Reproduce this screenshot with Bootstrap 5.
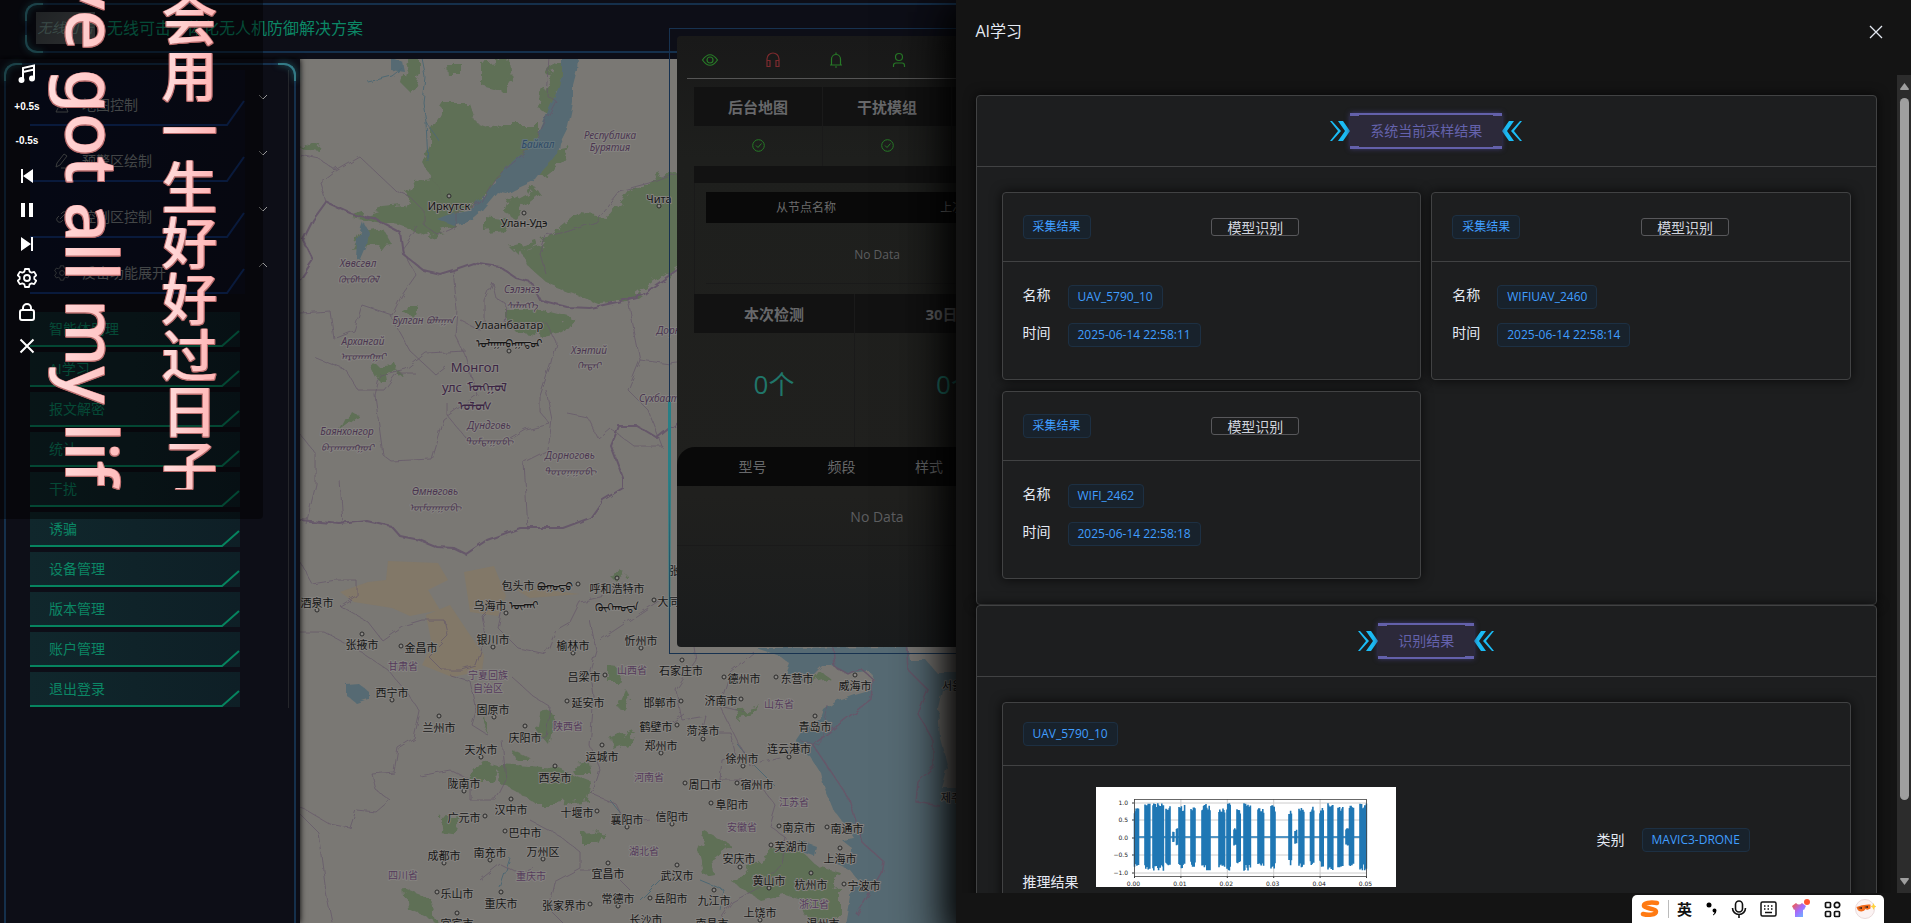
<!DOCTYPE html>
<html lang="zh-CN" data-bs-theme="dark">
<head>
<meta charset="utf-8">
<meta name="viewport" content="width=device-width, initial-scale=1">
<title>无线可击一体化无人机防御解决方案</title>
<link href="https://cdn.jsdelivr.net/npm/bootstrap@5.3.0/dist/css/bootstrap.min.css" rel="stylesheet">
<style>
  :root { --edge: #15304c; --line: #414243; --panel: #1d1e1f; --tag: #409eff; }
  body { font-family: "Open Sans", "Noto Sans CJK SC", sans-serif; font-size: 14px; line-height: 20px; background: #0d0e17; color: #e5eaf3; }
  button { font: inherit; }
  .shrinkable { min-width: 0; min-height: 0; }

  /* top bar */
  .top-frame { height: 50px; margin: 3px 0 6px 25px; border: solid var(--edge); border-width: 2px 0 2px 2px; border-radius: 12px 0 0 12px; color: #0b8765; font-size: 16px; padding-left: 9px; gap: 12px; }
  .corner { position: absolute; width: 18px; height: 18px; border: 2px solid #347b86; filter: drop-shadow(0 0 3px #2a7d86); }
  .corner.tl { left: -2px; top: -2px; border-width: 2px 0 0 2px; border-radius: 12px 0 0 0; }
  .corner.bl { left: -2px; bottom: -2px; border-width: 0 0 2px 2px; border-radius: 0 0 0 12px; }
  .corner.tr { right: -2px; top: -2px; border-width: 2px 2px 0 0; border-radius: 0 12px 0 0; }
  .brand-box { width: 59px; height: 32px; background: linear-gradient(120deg, #3b4043, #565a5e); color: #6c8a84; font-style: italic; font-size: 14px; }

  /* side menu */
  .side { width: 300px; padding-left: 4px; padding-right: 4px; box-shadow: 0 0 6px #000; z-index: 1; }
  .side-frame { border: 2px solid var(--edge); border-bottom: 0; border-radius: 12px 12px 0 0; padding: 5px 5px 0 24px; margin-top: 4px; }
  .side-scroll { border-right: 1px solid #25262b; height: 638px; }
  .side-blue { height: 56px; width: 215px; color: #7c8183; background: linear-gradient(90deg, #0b1026, #0d1020); border: 0; text-align: left; padding: 14px 0 0 24px; gap: 12px; }
  .side-green { height: 35px; width: 210px; margin-bottom: 5px; color: #0b8765; background: linear-gradient(90deg, #10272c, #0e1f26); border: 0; text-align: left; padding: 0 0 1px 19px; }
  .side-items { padding-top: 18px; }
  .under { position: absolute; left: 0; bottom: -2px; width: 100%; overflow: visible; }
  .chev { position: absolute; left: 228px; top: 24px; }

  /* lyric window lying over the page */
  .lyrics { position: absolute; left: 0; top: 0; width: 263px; height: 519px; background: rgba(0,0,0,.46); border-radius: 0 0 4px 0; z-index: 5; }
  .lyric-clip { position: absolute; inset: 0 0 30px 0; overflow: hidden; filter: drop-shadow(1px 0 0 #b96c6c) drop-shadow(-1px 0 0 #b96c6c) drop-shadow(0 1px 0 #b96c6c); }
  .lyric-line { position: absolute; writing-mode: vertical-rl; white-space: nowrap; color: transparent; background: linear-gradient(90deg, #ffdfdf, #ffb3b3); -webkit-background-clip: text; background-clip: text; }
  .lyric-cn { left: 161px; top: -9px; font: 500 56px/57px "Noto Sans CJK SC", sans-serif; }
  .lyric-en { left: 43px; top: -28px; font: 500 71px/100px "Noto Sans", sans-serif; }
  .tools { position: absolute; left: 14px; top: 56px; width: 26px; }
  .tools button { height: 34px; background: none; border: 0; padding: 0; color: #fff; }
  .tools .speed { font: bold 10px/20px "Liberation Sans Narrow", "Liberation Sans", sans-serif; }

  /* map */
  .map svg { display: block; width: 100%; height: 100%; }
  .map text { font-family: "Noto Sans", "Noto Sans CJK SC", "Noto Sans CJK KR", sans-serif; font-size: 11px; fill: #161616; text-anchor: middle; dominant-baseline: central; paint-order: stroke; stroke: #858380; stroke-width: 2px; stroke-linejoin: round; }
  .map text.prov { font-size: 10px; fill: #553b5c; }
  .map text.aimag { font-size: 10px; font-style: italic; fill: #4b3650; }
  .map text.realm { font-size: 13px; fill: #3c2644; }
  .map text.lake { font-size: 10px; font-style: italic; fill: #2f4a66; stroke: #62757c; }
  .map circle { fill: #8a8885; stroke: #2b2b2b; }

  /* monitor panel */
  .mon-frame { position: absolute; left: 669px; top: 28px; right: 0; height: 626px; border: 1px solid #173250; z-index: 2; }
  .mon-glow { position: absolute; left: -2px; top: 373px; width: 3px; height: 240px; background: linear-gradient(#277f86, #277f86 30%, transparent); }
  .mon { position: absolute; left: 677px; top: 36px; width: 400px; height: 611px; border-radius: 4px; background: linear-gradient(#191919, #1e1f1d 20%, #20201e 75%, #1a1c1d); z-index: 3; color: #5d5e60; }
  .mon-icons { height: 43px; margin: 0 10px; padding: 13px 4px 0; border-bottom: 1px solid #555; }
  .mon-icons > * { width: 63px; padding-left: 10px; }
  .mon-main { margin: 8px 18px 0 17px; }
  .mon table { width: 100%; table-layout: fixed; border-collapse: separate; border-spacing: 0; text-align: center; }
  .mon th, .mon td { border: 0 solid #1a1a1a; border-right-width: 1px; padding: 0; }
  .mon th { background: #121212; height: 39px; font-size: 15px; color: #67686a; }
  .mon td { height: 40px; }
  .mon td svg { display: block; margin: 0 auto 2px; }
  .mon th.strip { height: 17px; }
  .mon-nodes { height: 111px; padding: 9px 11px 0; border-left: 1px solid #1a1a1a; }
  .mon .sub th { background: #090909; height: 31px; font-size: 12px; font-weight: 400; border: 0; color: #6b6b6b; }
  .mon .sub .name { width: 60%; padding-right: 5px; }
  .mon .sub .seen { text-align: left; padding-left: 29px; }
  .mon .sub td { height: 61px; font-size: 12px; border-width: 0 0 1px; padding-top: 3px; }
  .mon .last th { background: #090909; height: 39px; font-size: 14px; font-weight: 400; border: 0; }
  .mon .last .round { border-radius: 18px 0 0 0; }
  .mon .last td { height: 60px; border-width: 0 0 1px; padding-top: 3px; }
  .mon .big { font-size: 26px; color: #20766a; height: 114px; padding-bottom: 12px; }
  .w31 { width: 31px; } .w86 { width: 86px; } .w89 { width: 89px; } .w129 { width: 129px; } .w161 { width: 161px; }

  /* drawer */
  .drawer { position: absolute; right: 0; top: 0; width: 50%; height: 100%; background: #141414; box-shadow: 0 16px 48px 16px rgba(0,0,0,.72), 0 12px 32px #000; z-index: 10; }
  .drawer-head { height: 75px; padding: 21px 26px 0 20px; font-size: 16px; }
  .drawer-head svg { display: block; }
  .drawer-body { margin-bottom: 30px; }
  .drawer-scroll { overflow: hidden; padding: 20px 20px 0 20px; }
  .bar { width: 14px; background: #2c2c2c; }
  .thumb { position: absolute; left: 3px; top: 23px; bottom: 93px; width: 9px; border-radius: 5px; background: #9f9f9f; }
  .box { background: var(--panel); border: 1px solid var(--line); border-radius: 4px; box-shadow: 0 0 12px rgba(0,0,0,.72); }
  .box-head { border-bottom: 1px solid var(--line); }
  .outer-head { height: 71px; }
  .pad { padding: 25px; }
  .pair { display: grid; grid-template-columns: 1fr 1fr; gap: 11px 10px; }
  .inner-head { height: 69px; padding: 0 20px; }
  .inner-body { height: 117px; padding: 23px 20px 0; gap: 14px; }
  .field { gap: 17px; }
  .field > span:first-child { line-height: 20px; }
  .result-head { height: 63px; padding: 0 20px; }
  .result-body { padding: 21px 20px 20px; }
  .result-wave { flex: 0 0 574px; gap: 17px; }
  .result-wave > span:first-child { line-height: 10px; }
  .result-kind { height: 106px; }
  .chip { display: inline-block; height: 24px; padding: 0 9px; font-size: 12px; color: var(--tag); background: #18222c; border: 1px solid #1d3043; border-radius: 4px; line-height: 22px; white-space: nowrap; }
  .plain-btn { height: 18px; line-height: 15px; width: 88px; padding: 0; border: 1px solid #58585b; border-radius: 3px; background: none; color: #cfd3dc; }
  .heading { height: 36px; line-height: 32px; padding: 0 20px; color: #6462ac; background: #2c293a; border: solid #6360aa; border-width: 2px 0; box-shadow: 0 0 5px #3d3a6e; font-size: 14px; font-weight: 400; margin: 0; }
  .heading::before, .heading::after { content: ""; position: absolute; inset: 0 auto 0 0; width: 9px; border: solid #6360aa; border-width: 1px 0; }
  .heading::after { inset: 0 0 0 auto; }
  .chart { width: 300px; height: 100px; background: #fff; }
  .chart text { font: 6px "DejaVu Sans", sans-serif; fill: #222; }

  /* input method bar */
  .ime { position: absolute; right: 27px; bottom: 0; width: 252px; height: 28px; padding: 0 8px; background: #fff; border-radius: 5px 5px 0 0; color: #111; z-index: 20; }
  .ime b { font-size: 15px; }
</style>
</head>
<body>
<div class="vh-100 d-flex flex-column overflow-hidden position-relative">

  <header>
    <div class="top-frame position-relative d-flex align-items-center">
      <i class="corner tl"></i><i class="corner bl"></i>
      <div class="brand-box d-flex align-items-center justify-content-center text-nowrap">无线可击</div>
      <span>无线可击一体化无人机防御解决方案</span>
    </div>
  </header>

  <div class="d-flex flex-grow-1 shrinkable">
    <nav class="side d-flex flex-column flex-shrink-0">
      <div class="side-frame flex-grow-1 position-relative">
        <i class="corner tl"></i><i class="corner tr"></i>
        <div class="side-scroll" id="menu"></div>
      </div>
    </nav>

    <main class="map flex-grow-1 shrinkable">
      <svg viewBox="300 59 1611 864" preserveAspectRatio="xMinYMin slice" id="map">
        <defs>
          <filter id="rough" x="-5%" y="-5%" width="110%" height="110%"><feTurbulence type="fractalNoise" baseFrequency=".09" numOctaves="3" seed="4"/><feDisplacementMap in="SourceGraphic" scale="14"/></filter>
          <filter id="edgy" x="-5%" y="-5%" width="110%" height="110%"><feTurbulence type="fractalNoise" baseFrequency=".1" numOctaves="2" seed="9"/><feDisplacementMap in="SourceGraphic" scale="6"/></filter>
        </defs>
        <rect x="300" y="59" width="1611" height="864" fill="#7a7874"/>
        <g fill="#827868">
          <path d="M388 561l50 2 10 17-20 10 12 20-30 6-18-8-38-6-14-10 28-10 18-2zM464 572l30-6 12 30-8 20-28-4zM426 615l24-10 20 30 14 20-2 16-30 6-30-12 10-20z" />
          <path d="M510 586l70 8-50 4z"/>
        </g>
        <g fill="#5f6f57" filter="url(#rough)">
          <path d="M408 58l12 0 0 16-8 20-10-10zM445 62l15 0 0 12-14 0zM482 64l28-4 2 20-8 12-22-6zM430 130l15-26 25 0 6 18 24 8 6-6 34 0 0 10-18 28-22 20-10 12-30 20-12 4-18-14 4-22-12-20 8-16zM555 62l10 0-6 35-10 18-10-6 2-15z"/>
          <path d="M416 182l18-2 10 22 14 26-30 8-28-10-48-8 32-10 20-2zM485 216l30 4-10 10-20 2zM508 200l26-14 6 8-28 22-8-4zM550 150l20-4-8 16-18 14-14 4z"/>
          <path d="M550 236l30-24 30 4 20-26 40-18 12 2 0 90-30 20-24 18-28 2-26-10-26-10-20-18-6-14 20-6zM510 248l26-8 2 6-22 8zM406 304l12 0-4 14-10-4zM506 310l36 0 32 8-12 14-20 4-26-4-10-12zM352 250l24-4 16-2-8-14-24 4z"/>
          <path d="M302 142l20 4-2 6-20-4zM500 764l56 4 36 14-4 18-32 4-20 0-22-14-16-8zM540 708l14 6-6 30-12-14zM608 664l14 2-4 16-10 0zM626 690l6 8-8 12-6-2zM612 738l22-8-4 14-16 6zM570 768l20-4 2 10-18 0zM482 762l20 6-12 12-22 0zM440 818l20-2-6 20-12-2zM582 834l22-2-6 12-16 0zM404 888l26 10 6 24-30-14zM512 750l20 10-16 0zM484 716l4 20-6-16zM706 832l24 12-18 14 2 16-10 2-6-26zM750 864l40-22 28 24 22 6-16 34-40-12-24 6-26-16zM800 900l40-14 0 34-30 6zM820 670l10 8-20 6zM735 712l26-6-8 8-18 4zM340 430l10-20 10 6zM370 366l26-2 4 10-24 4zM610 576l10-6 6 4-12 6z"/>
        </g>
        <g fill="#566b73">
          <g filter="url(#edgy)">
            <path d="M562 58l16 0-1 12-4 15 0 18-5 24-8 16-2 12-14 14-8 11-22 10-7 4-10-2-15 18-14 12-14 4-17-7 10-4 22-4 10-10 12-14 11-15 14-14 15-10 8-15 9-22 10-22 4-14z"/>
            <path d="M363 222l6 10-2 14-6 14-5-2 1-18zM346 684l12-1 10 8 0 8-12 4-10-8zM391 58l12 4 2 10-14-2zM800 840l16 6-2 10-12-4z"/>
            <path d="M756 648l24 8 10 8-4 10 10 8 18-8 8-8 10 0 16 8 22-2 4 8-6 10-14 4-16 6-14 10-4 10-16 8-8 12 2 10 12 6 10 16 4 16 8 20 14 18 8 12-12 2 10 8-4 12-12 4 14 6 8 10-8 16-6 34h230V646z"/>
          </g>
        </g>
        <path d="M906 640l4 20 16 0 10 12 60 0v-40zM938 708l4-18 60 0v98l-60 0 6-20-8-30z" fill="#7a7874" filter="url(#edgy)"/>
        <g fill="none" stroke="#4f6873" filter="url(#edgy)"><path d="M422 58l4 20-3 24 3 20 2 40M368 82l24-6 10-8M426 122l14 20M738 745l16 20 20 20M700 880l24 10-4 20M640 900l20-20 20-2M610 800l16 20M510 858l-10 30"/></g>
        <g fill="none" stroke="#66586a" filter="url(#edgy)">
          <g stroke-width="2">
            <path d="M300 280l13-20-10-20 10-20 13-18 24 11 27 7 23 12 3 22 20 16 17 4 13-4 20-7 27 4 16 11 15 4 9 18 27 7 23 1 27-6 26-7 10-8 24-17"/>
            <path d="M300 520l40 4 27-3 25 6 8 9 20 4 17 7 17 1 12 6 21-14 33-12 43 0 27-10 13-18 20-12 0-10-12-32 8-20 18 0 20 12 20-16"/>
          </g>
          <path stroke-opacity=".75" d="M300 155l20 4 16 12 24-14 36 34 14 6 14 14 0 14 14 10 18-8 0-14 24-10 16-26 24-20 16-18 20-38-10-6 4-50M326 202l-6-20 18-14M546 274l-6-20 6-18 20-4 30-10 24-30 30-8 30-12M300 313l30-2 4 28 20-8 8-26 30 10 10-20 14-20-14-26 16-22M390 315l20 36 26 24 10-8M453 270l4 40-2 25 10 20 12 40-34 24-12 40-40 2-8-6-8-60 5-20 26-6 20-16 40-2M484 330l0-30 8-18 4 16 10 6-2 20-20 0M460 320l20 10 40-6 26-2 10 20-6 24-10 30 0 16 10 12-24 6-20 12-26 2-14-6-20-24 0-12M546 390l6 30-4 30-24 12 4 68M628 300l12 60-12 30 20 20 14 36-28 0-24-18-12 10-10-20-20-4M640 360l30 4 30-4M300 434l16 20 0 30-10 40M340 480l3 44M316 358l30 12 12 20 26 0 12-16 20 0"/>
          <path stroke-opacity=".75" d="M300 562l12 22 24-4 20 0 0 16-16 10 28 16 14 18 20-14 20-6 22 0 4 16-20 20 14 14 20 0 14-4 10-30-4-20 10-10 10 4-4 18 20 20 28 6 10-24 14-8 10-20 24-6 18-14M300 632l24 0 34 18 30 20 20 24 12 18-6 26-16 10-4 24-22 2 4 16 14 10-14 12-20-2-6 18-20-4-24-14-26-10M420 776l30-6 20 10 0 20 26 0 10-20-4-40M450 675l20 6 6 30-4 14 16 10M510 675l24 22 16 10-4 30-24 6M590 620l6 30-6 20 4 26-4 50 10 24-8 24 24 10 10 20 24-4M600 640l60-40M650 730l20-6 14-10M530 820l30 16 20 16 0 16-26 14-6 26 20 20M580 870l30 0 20 20M480 880l20-16 20 10 14-6M300 814l18 18 8 60 6 30M690 620l6 40-20 30 6 30 24-4-4 16 28 0 6 24-14 4-2 20 36 0 20 26-6 20 16 12-4 26-20 22-30 16-24 36M754 652l-24 20-10 34 24 6M720 706l30 60 30-8M800 740l20 6 8-40"/>
          <path stroke-width="1.5" d="M833 647l2 20 14 8 12-6 12 10-2 20-58 46 36 54 14 44 20 18-2 12-24 42M906 640l2 30 20 20-10 24 16 28 0 24-16 16-2 20 24 4"/>
        </g>
      </svg>
    </main>
  </div>

  <section class="mon-frame"><div class="mon-glow"></div></section>
  <section class="mon">
    <div class="mon-icons d-flex">
      <span><svg width="18" height="18" viewBox="0 0 18 18" fill="none" stroke="#277a27" stroke-width="1.2"><path d="M1.500 9Q9-1.500 16.500 9Q9 19.500 1.500 9z"/><circle cx="9" cy="9" r="3"/></svg></span>
      <span><svg width="18" height="18" viewBox="0 0 18 18" fill="none" stroke="#7b2a2d" stroke-width="1.2"><path d="M3 10V8a6 6 0 0 1 12 0v2M3 9.500h3v6H3zM15 9.500h-3v6h3z"/></svg></span>
      <span><svg width="18" height="18" viewBox="0 0 18 18" fill="none" stroke="#277a27" stroke-width="1.2"><path d="M3 14h12M4.500 14V8a4.500 4.500 0 0 1 9 0v6M9 1.500v2M8 16h2"/></svg></span>
      <span><svg width="18" height="18" viewBox="0 0 18 18" fill="none" stroke="#277a27" stroke-width="1.2"><circle cx="9" cy="6" r="3.5"/><path d="M3.500 16v-1.500a2.500 2.500 0 0 1 2.500-2.500h6a2.500 2.500 0 0 1 2.500 2.500V16"/></svg></span>
    </div>
    <div class="mon-main">
      <table>
        <colgroup><col class="w129"><col class="w129"><col></colgroup>
        <tr><th>后台地图</th><th>干扰模组</th><th>压制</th></tr>
        <tr>
          <td><svg width="13" height="13" viewBox="0 0 13 13" fill="none" stroke="#277a27"><circle cx="6.5" cy="6.5" r="5.8"/><path d="M4 6.500l2 2 3.500-4"/></svg></td>
          <td><svg width="13" height="13" viewBox="0 0 13 13" fill="none" stroke="#277a27"><circle cx="6.5" cy="6.5" r="5.8"/><path d="M4 6.500l2 2 3.500-4"/></svg></td>
          <td></td></tr>
        <tr><th colspan="3" class="strip"></th></tr>
      </table>
      <div class="mon-nodes">
        <table class="sub"><tr><th class="name">从节点名称</th><th class="seen">上次在线</th></tr>
          <tr><td colspan="2">No Data</td></tr></table>
      </div>
      <table>
        <colgroup><col class="w161"><col></colgroup>
        <tr><th>本次检测</th><th>30日检测</th></tr>
        <tr><td class="big">0个</td><td class="big">0个</td></tr>
      </table>
    </div>
    <table class="last">
      <colgroup><col class="w31"><col class="w89"><col class="w89"><col class="w86"><col></colgroup>
      <tr><th class="round"></th><th>型号</th><th>频段</th><th>样式</th><th></th></tr>
      <tr><td colspan="5">No Data</td></tr>
    </table>
  </section>

  <aside class="drawer d-flex flex-column">
    <div class="drawer-head d-flex flex-shrink-0 justify-content-between align-items-start">
      <span>AI学习</span>
      <button type="button" class="border-0 bg-transparent p-0 mt-1" aria-label="关闭"><svg width="18" height="14" viewBox="0 0 18 14" stroke="#e5eaf3" stroke-width="1.3"><path d="M3 1l12 12M15 1L3 13"/></svg></button>
    </div>
    <div class="drawer-body shrinkable d-flex flex-grow-1">
      <div class="drawer-scroll flex-grow-1">
        <section class="box">
          <div class="box-head outer-head d-flex align-items-center justify-content-center" data-title="系统当前采样结果"></div>
          <div class="pad pair" id="samples"></div>
        </section>
        <section class="box">
          <div class="box-head outer-head d-flex align-items-center justify-content-center" data-title="识别结果"></div>
          <div class="pad">
            <article class="box">
              <div class="box-head result-head d-flex align-items-center"><span class="chip">UAV_5790_10</span></div>
              <div class="result-body d-flex align-items-start">
                <div class="result-wave d-flex align-items-end"><span>推理结果</span>
                  <svg class="chart" viewBox="0 0 300 100" id="wave"></svg></div>
                <div class="result-kind field d-flex align-items-center"><span>类别</span><span class="chip">MAVIC3-DRONE</span></div>
              </div>
            </article>
          </div>
        </section>
      </div>
      <div class="bar position-relative flex-shrink-0">
        <svg class="position-absolute start-0 top-0" width="14" height="20" fill="#9f9f9f"><path d="M7.500 8l4.500 6q0 1-1 1H4q-1 0-1-1z"/></svg>
        <div class="thumb"></div>
        <svg class="position-absolute start-0 bottom-0" width="14" height="20" fill="#9f9f9f"><path d="M7.500 12l4.500-6q0-1-1-1H4q-1 0-1 1z"/></svg>
      </div>
    </div>
  </aside>

  <div class="lyrics">
    <div class="lyric-clip">
      <div class="lyric-line lyric-en">ve got all my life</div>
      <div class="lyric-line lyric-cn">会用一生好好过日子</div>
    </div>
    <div class="tools d-flex flex-column align-items-center">
      <button type="button" aria-label="音乐"><svg width="18" height="20" viewBox="0 0 18 20" fill="none" stroke="#fff" stroke-width="2"><path d="M5 16V4l11-2.500V14M5 8l11-2.500"/><circle cx="3.5" cy="16" r="2" fill="#fff"/><circle cx="14" cy="14.5" r="2" fill="#fff"/></svg></button>
      <button type="button" class="speed">+0.5s</button>
      <button type="button" class="speed">-0.5s</button>
      <button type="button" aria-label="上一首"><svg width="14" height="14" fill="#fff"><path d="M1 0h2v14H1zM13 0v14L3 7z"/></svg></button>
      <button type="button" aria-label="暂停"><svg width="14" height="14" fill="#fff"><path d="M1 0h4v14H1zM9 0h4v14H9z"/></svg></button>
      <button type="button" aria-label="下一首"><svg width="14" height="14" fill="#fff"><path d="M11 0h2v14h-2zM1 0v14l10-7z"/></svg></button>
      <button type="button" aria-label="设置"><svg width="20" height="20" viewBox="0 0 20 20" fill="none" stroke="#fff" stroke-width="1.8" stroke-linejoin="round"><use href="#gear"/></svg></button>
      <button type="button" aria-label="锁定"><svg width="18" height="20" viewBox="0 0 18 20" fill="none" stroke="#fff" stroke-width="2"><rect x="2" y="8" width="14" height="10" rx="2"/><path d="M5 8V6a4 4 0 0 1 8 0v2"/></svg></button>
      <button type="button" aria-label="关闭歌词"><svg width="16" height="16" stroke="#fff" stroke-width="2"><path d="M1.500 1.500l13 13M14.500 1.500l-13 13"/></svg></button>
    </div>
  </div>

  <div class="ime d-flex align-items-center justify-content-between">
    <div class="d-flex align-items-center gap-2">
      <svg width="20" height="18" viewBox="0 0 20 18" fill="none" stroke="#ff7a12" stroke-width="4.5" stroke-linecap="round"><path d="M17 3C10 2 3.500 3 4 6s12 2 12 5.500S8 15.500 3 14"/></svg>
      <svg width="1" height="18"><path d="M.500 0v18" stroke="#bbb"/></svg>
      <b>英</b>
    </div>
    <svg width="12" height="14"><circle cx="3" cy="3" r="2.5"/><path d="M6.500 8.500a2 2 0 1 1 4 0q0 3-3 5l-.500-1q1.500-1 1.500-2-2 0-2-2z"/></svg>
    <svg width="16" height="18" viewBox="0 0 16 18" fill="none" stroke="#111" stroke-width="1.6"><rect x="4.5" y="1" width="7" height="11" rx="3.5"/><path d="M1.500 8a6.500 6.500 0 0 0 13 0M8 14.500V18"/></svg>
    <svg width="17" height="16" viewBox="0 0 17 16" fill="none" stroke="#111" stroke-width="1.5"><rect x="1" y="1" width="15" height="14" rx="1.5"/><path d="M4 5h9M4 8h9" stroke-dasharray="1.5 2"/><path d="M5 11.500h7"/></svg>
    <svg width="20" height="20" viewBox="0 0 20 20"><defs><linearGradient id="tee" x2="1" y2="1"><stop stop-color="#ff5a2e"/><stop offset=".5" stop-color="#a46bff"/><stop offset="1" stop-color="#5cc8ff"/></linearGradient></defs><path d="M1 7l4-3q3 3 6 0l4 3-2 4-1-.500V18H4v-7.500L3 11z" fill="url(#tee)"/><circle cx="16" cy="3" r="3" fill="#ff5533"/></svg>
    <svg width="17" height="17" viewBox="0 0 17 17" fill="none" stroke="#111" stroke-width="1.7"><rect x="1.5" y="1.5" width="5" height="5" rx="1"/><circle cx="13" cy="4" r="2.7"/><rect x="1.5" y="10.5" width="5" height="5" rx="1"/><rect x="10.5" y="10.5" width="5" height="5" rx="1"/></svg>
    <svg width="21" height="20" viewBox="0 0 21 20"><circle cx="10" cy="10" r="9.5" fill="#fbf3f3" stroke="#eadada"/><path d="M1.500 8q6-3 14-2.500v4q-3 2-5 .500-1 2-4 2.500-4 0-5-4.500z" fill="#f26a1c"/><path d="M3 9l4-1v2zM9 8l4-1v2z" fill="#33201a"/><path d="M18.500 4l1 2.500 2 1-2 1-1 2.500-1-2.500-2-1 2-1z" fill="#ffd23c"/></svg>
  </div>
</div>

<svg width="0" height="0" class="position-absolute"><defs>
  <g id="gear"><path d="M8 1h4l.6 2.600 2 1.100 2.600-.8 2 3.400L17.300 9v2l1.900 1.700-2 3.400-2.600-.8-2 1.100L12 19H8l-.6-2.600-2-1.100-2.600.8-2-3.400L2.700 11V9L.8 7.300l2-3.400 2.600.8 2-1.100z"/><circle cx="10" cy="10" r="3"/></g>
</defs></svg>

<script src="https://cdn.jsdelivr.net/npm/bootstrap@5.3.0/dist/js/bootstrap.bundle.min.js"></script>
<script>
  // side menu
  const groups = [
    ['地图控制', '<path d="M2 15l3-6 3 3 3-4 3 7zM8 1v6M5 4l3 3 3-3"/>'],
    ['预警区绘制', '<path d="M2 14l1-4 7-9 3 2-7 9zM7 15h8"/>'],
    ['控制区控制', '<path d="M6 10l5-5M7 5l2-2a3 3 0 0 1 4 4l-2 2M9 11l-2 2a3 3 0 0 1-4-4l2-2"/>'],
    ['反击功能展开', '<use href="#gear" transform="scale(.8)"/>']
  ];
  const items = ['智能体助理', 'AI学习', '报文解密', '统计', '干扰', '诱骗', '设备管理', '版本管理', '账户管理', '退出登录'];
  document.getElementById('menu').innerHTML =
    groups.map(([t, icon], i) => `<button type="button" class="side-blue position-relative d-flex align-items-center">
      <svg width="16" height="16" viewBox="0 0 16 16" fill="none" stroke="#6a6e70">${icon}</svg><span>${t}</span>
      <svg class="under" height="28" viewBox="0 0 215 28" fill="none" stroke="#12306f" stroke-width="2"><path d="M0 25h197l17-24"/></svg>
      <svg class="chev" width="10" height="6" fill="none" stroke="#9a9a9a"><path d="${i < 3 ? 'M1 1l4 4 4-4' : 'M1 5l4-4 4 4'}"/></svg></button>`).join('') +
    '<div class="side-items">' +
    items.map(t => `<button type="button" class="side-green position-relative d-block">${t}
      <svg class="under" height="18" viewBox="0 0 210 18" fill="none" stroke="#06845f" stroke-width="2"><path d="M0 15h192l17-15"/></svg></button>`).join('') + '</div>';

  // drawer headings
  const arrows = d => `<svg width="20" height="20" viewBox="0 0 20 20"><path d="${d}" fill="#1bbcf5"/></svg>`;
  document.querySelectorAll('[data-title]').forEach(el => {
    el.innerHTML = arrows('M0 0h2l9 10-9 10H0l8-10zM8 0h5l7 10-7 10H8l7-10z') +
      `<h2 class="heading position-relative">${el.dataset.title}</h2>` +
      arrows('M20 0h-2L9 10l9 10h2l-8-10zM12 0H7L0 10l7 10h5L5 10z');
  });

  // sample cards
  document.getElementById('samples').innerHTML = [
    ['UAV_5790_10', '2025-06-14 22:58:11'], ['WIFIUAV_2460', '2025-06-14 22:58:14'], ['WIFI_2462', '2025-06-14 22:58:18']
  ].map(([n, t]) => `<article class="box">
      <div class="box-head inner-head row g-0 align-items-center"><div class="col-6"><span class="chip">采集结果</span></div>
        <div class="col-6 d-flex"><button type="button" class="plain-btn">模型识别</button></div></div>
      <div class="inner-body d-flex flex-column">
        <div class="field d-flex"><span>名称</span><span class="chip">${n}</span></div>
        <div class="field d-flex"><span>时间</span><span class="chip">${t}</span></div></div>
    </article>`).join('');

  // waveform: burst start, end and height
  const bursts = [[38.5,43,.85],[49,54,.95],[57,68,.96],[70,74,.88],[77,78.5,.15],[80.5,82,.25],[83,89,.9],[95,99,.85],[106,114,.95],[123,129,.85],[131,134.5,.95],[138,140,.25],[141,144.5,.8],[148,154.5,.95],[162,168,.85],[175,179.5,.9],[193,196,.8],[199,201,.2],[203,208,.85],[214.5,218,.85],[224,228,.85],[232,237.5,.95],[242,247,.85],[250,253,.25],[253.5,258,.9],[264,270.5,.95]];
  let s = '', seed = 7;
  const rnd = () => (seed = seed * 16807 % 2147483647) / 2147483647;
  [['1.0',16],['0.5',33],['0.0',51],['−0.5',68],['−1.0',86]].forEach(([t, y]) => s += `<path d="M39 ${y}h231" stroke="#ccc" stroke-width="1"/><path d="M36 ${y}h3" stroke="#333"/><text x="32" y="${y + 2}" text-anchor="end">${t}</text>`);
  ['0.00','0.01','0.02','0.03','0.04','0.05'].forEach((t, i) => { const x = 38.5 + i * 46.4; s += `<path d="M${x} 12v77" stroke="#ccc"/><path d="M${x} 89v2" stroke="#333"/><text x="${x - 1}" y="98.5" text-anchor="middle">${t}</text>`; });
  let d = 'M39 50h231';
  bursts.forEach(([a, b, h]) => { for (let x = a; x <= b; x += .8) { const u = h * (.8 + .22 * rnd()), v = h * (.8 + .22 * rnd()); d += `M${x} ${50 - 35 * u}V${50 + 35 * v}`; } });
  document.getElementById('wave').innerHTML = s + `<path d="${d}" stroke="#1f77b4" stroke-width="1.6"/><rect x="38.5" y="12.5" width="232" height="77" fill="none" stroke="#444" stroke-width=".8"/>`;

  // map labels: name, x, y, then the town's dot
  const towns = `Иркутск 449 205 449 196|Улан-Удэ 524 222 524 213|Чита 659 198 659 206|Улаанбаатар 509 324 509 351|酒泉市 317 602 317 610|张掖市 362 644 362 634|金昌市 421 647 401 646|包头市 518 585 578 584|呼和浩特市 617 588 617 578|乌海市 490 605 506 613|大同市 674 601 654 600|张家口市 691 570|银川市 493 639 493 647|榆林市 573 645 573 653|忻州市 641 640 641 648|吕梁市 584 676 605 675|石家庄市 681 670 682 660|西宁市 392 692 392 700|延安市 588 702 567 701|固原市 493 709 494 717|兰州市 439 727 439 716|庆阳市 525 737 525 726|邯郸市 660 702 681 701|鹤壁市 656 726 677 725|郑州市 661 745 661 753|天水市 481 749 481 757|运城市 602 756 602 745|西安市 555 777 555 766|陇南市 464 783 464 791|汉中市 511 809 511 799|广元市 464 817 485 816|十堰市 577 812 597 811|襄阳市 627 819 627 827|信阳市 672 816 672 824|巴中市 525 832 505 831|成都市 444 855 444 863|南充市 490 852 490 860|万州区 543 851 543 859|宜昌市 608 873 608 863|武汉市 677 875 677 865|乐山市 457 893 437 892|重庆市 501 903 501 892|张家界市 564 905 590 904|常德市 618 898 618 906|岳阳市 671 898 650 898|长沙市 646 919|宜宾市 457 923 457 913|德州市 744 678 724 677|东营市 797 678 776 677|威海市 855 685 855 675|济南市 721 700 741 699|菏泽市 703 730 703 739|青岛市 815 726 815 716|徐州市 742 758 743 766|连云港市 789 748 789 757|周口市 705 784 685 783|宿州市 757 784 737 783|阜阳市 732 804 711 803|南京市 799 827 779 826|南通市 847 828 827 827|芜湖市 791 846 771 845|安庆市 739 858 740 867|上海市 840 858 840 848|黄山市 769 880 769 888|杭州市 811 884 811 873|宁波市 864 885 844 884|九江市 714 900 714 890|上饶市 760 912 760 920|南昌市 712 923|温州市 823 923|서울 952 685|제주시 956 797`;
  const script = `ᠤᠯᠠᠭᠠᠨᠪᠠᠭᠠᠲᠤᠷ 509 342|ᠪᠤᠭᠤᠲᠤ 555 585|ᠬᠥᠬᠡᠬᠣᠲᠠ 617 606|ᠦᠬᠠᠢ 524 604`;
  const prov = `甘肃省 403 666|山西省 632 670|宁夏回族 488 675|自治区 488 688|陕西省 568 726|河南省 649 777|湖北省 644 851|四川省 403 875|重庆市 531 876|山东省 779 704|江苏省 794 802|安徽省 742 827|浙江省 814 904`;
  const aimag = `Республика 610 135|Бурятия 610 147|Хөвсгөл 358 263|Сэлэнгэ 522 289|Булган 408 320|Архангай 363 341|Хэнтий 589 350|Дорнод 674 330|Сүхбаатар 665 398|Дундговь 489 425|Баянхонгор 347 431|Дорноговь 570 455|Өмнөговь 435 491|ᠬᠥᠪᠰᠦᠭᠦᠯ 358 279|ᠰᠡᠯᠡᠩᠭᠡ 522 305|ᠪᠤᠯᠠᠭᠠᠨ 440 320|ᠠᠷᠤᠬᠠᠩᠭᠠᠢ 363 356|ᠬᠡᠨᠲᠡᠢ 589 365|ᠳᠤᠮᠳᠠᠭᠣᠪᠢ 489 441|ᠪᠠᠶᠠᠨᠬᠣᠩᠭᠣᠷ 347 447|ᠳᠣᠷᠣᠨᠠᠭᠣᠪᠢ 570 471|ᠥᠮᠦᠨᠡᠭᠣᠪᠢ 435 507`;
  const realm = `Монгол 475 367|улс 452 387|ᠮᠣᠩᠭᠣᠯ 487 387|ᠤᠯᠤᠰ 475 406`;
  const draw = (list, cls) => list.split('|').map(r => {
    const [t, x, y, cx, cy] = r.split(' ');
    return (cx ? `<circle cx="${cx}" cy="${cy}" r="2"/>` : '') + `<text class="${cls}" x="${x}" y="${y}">${t}</text>`;
  }).join('');
  document.getElementById('map').insertAdjacentHTML('beforeend', draw(towns, 'town') + draw(script, 'town') + draw(prov, 'prov') + draw(aimag, 'aimag') + draw(realm, 'realm') + draw('Байкал 538 144', 'lake'));
</script>
</body>
</html>
